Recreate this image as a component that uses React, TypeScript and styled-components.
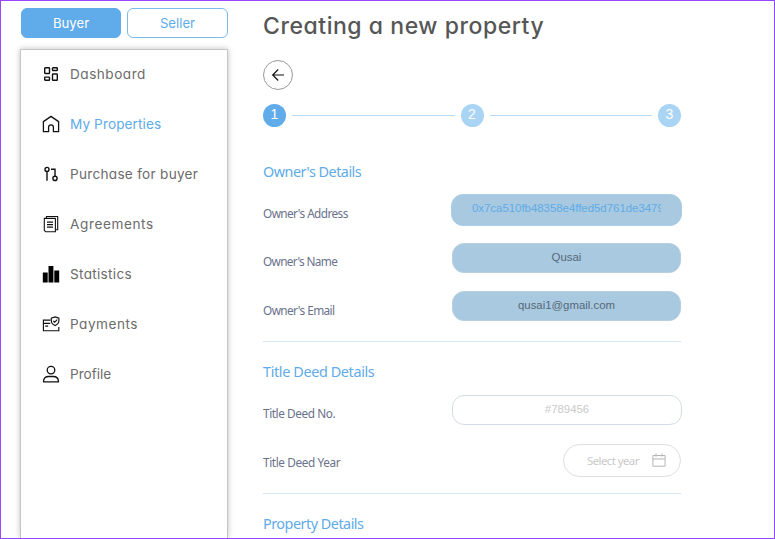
import React from "react";
import styled, { createGlobalStyle } from "styled-components";

const GlobalStyle = createGlobalStyle`
  * { box-sizing: border-box; }
  body { margin: 0; background: #fff; }
`;

const geometric = `font-family: Inter, sans-serif; font-feature-settings: "cv11";`;
const humanist = `font-family: "Noto Sans", "DejaVu Sans Condensed", sans-serif;`;

const Page = styled.div`
  display: flex;
  width: 775px;
  height: 539px;
  overflow: hidden;
  border: 1px solid #9747ff;
  background: #fff;
`;

const Sidebar = styled.aside`
  display: flex;
  flex-direction: column;
  width: 208px;
  margin-left: 19px;
  padding-top: 7px;
  flex: none;
`;

const RoleTabs = styled.div`
  display: flex;
  gap: 6px;
  padding-left: 1px;
`;

const RoleButton = styled.button<{ $active?: boolean }>`
  ${geometric}
  width: ${(p) => (p.$active ? 100 : 101)}px;
  height: 30px;
  padding: 0;
  border: 1px solid ${(p) => (p.$active ? "#60abe9" : "#7dbbed")};
  border-radius: 6px;
  background: ${(p) => (p.$active ? "#60abe9" : "#fff")};
  color: ${(p) => (p.$active ? "#fff" : "#60abe9")};
  font-size: 13.2px;
  font-weight: 400;
  line-height: 28px;
`;

const Nav = styled.nav`
  flex: 1;
  margin-top: 11px;
  padding-left: 21px;
  border: 1px solid #c5c5c5;
  border-bottom: 0;
  background: #fff;
  box-shadow: 0 0 6px rgba(0, 0, 0, 0.25);
`;

const NavItem = styled.a<{ $active?: boolean; $tracking: number }>`
  ${geometric}
  display: flex;
  align-items: center;
  gap: 10px;
  height: 49.9px;
  padding-bottom: 1.5px;
  color: ${(p) => (p.$active ? "#60abe9" : "#6b6b6b")};
  font-size: 13.6px;
  font-weight: 400;
  letter-spacing: ${(p) => p.$tracking}px;
  white-space: nowrap;

  svg { flex: none; width: 18px; height: 18px; color: #111; }
`;

const Main = styled.main`
  width: 418px;
  margin-left: 35px;
  flex: none;
`;

const Title = styled.h1`
  ${geometric}
  margin: 0;
  height: 58.5px;
  line-height: 50px;
  color: #565656;
  font-size: 23px;
  font-weight: 500;
  letter-spacing: 0.55px;
  white-space: nowrap;
`;

const BackButton = styled.button`
  display: flex;
  align-items: center;
  justify-content: center;
  width: 30px;
  height: 30px;
  padding: 0;
  border: 1px solid #999;
  border-radius: 50%;
  background: #fff;
`;

const Stepper = styled.div`
  display: flex;
  align-items: center;
  gap: 6px;
  height: 23px;
  margin-top: 14.5px;
`;

const Step = styled.span<{ $active?: boolean }>`
  width: 23px;
  height: 23px;
  flex: none;
  border-radius: 50%;
  background: ${(p) => (p.$active ? "#60abe9" : "#a9d4f4")};
  color: #fff;
  font: 14px/21px "Liberation Sans", sans-serif;
  text-align: center;
`;

const StepLine = styled.span`
  flex: 1;
  height: 1px;
  background: #b8dbf5;
`;

const Section = styled.section`
  margin-top: 31px;
`;

const NextSection = styled(Section)`
  margin-top: 0;
  padding-top: 16px;
  border-top: 1px solid #d3e8f6;
`;

const SectionTitle = styled.h2<{ $tracking: number }>`
  ${humanist}
  margin: 0;
  height: 27px;
  line-height: 27px;
  color: #60abe9;
  font-size: 14.4px;
  font-weight: 400;
  letter-spacing: ${(p) => p.$tracking}px;
`;

const Field = styled.div<{ $last?: boolean }>`
  display: flex;
  align-items: center;
  justify-content: space-between;
  height: 48.6px;
  margin-bottom: ${(p) => (p.$last ? "10.5px" : "0")};
`;

const Label = styled.label<{ $tracking: number }>`
  ${humanist}
  padding-top: 7px;
  color: #69718b;
  font-size: 11.8px;
  letter-spacing: ${(p) => p.$tracking}px;
  white-space: nowrap;
`;

const Pill = styled.div<{ $tone: "address" | "filled" | "empty" }>`
  width: ${(p) => ({ address: 231, filled: 229, empty: 230 })[p.$tone]}px;
  height: ${(p) => (p.$tone === "address" ? 32 : 30)}px;
  padding: 0 20px;
  margin-top: ${(p) => (p.$tone === "address" ? 1 : 0)}px;
  margin-right: ${(p) => (p.$tone === "filled" ? 0 : -1)}px;
  border: 1px solid ${(p) => ({ address: "#a8cee9", filled: "#b9cfe0", empty: "#d5dbe8" })[p.$tone]};
  border-radius: 12px;
  background: ${(p) => (p.$tone === "empty" ? "#fff" : "#a8c9df")};
  color: ${(p) => ({ address: "#60abe9", filled: "#566879", empty: "#c9c9c9" })[p.$tone]};
  font: 11.4px/26px "Liberation Sans", sans-serif;
  text-align: center;
`;

const PillText = styled.span`
  display: block;
  overflow: hidden;
  white-space: nowrap;
`;

const YearPicker = styled.div`
  ${humanist}
  display: flex;
  align-items: center;
  justify-content: space-between;
  width: 118px;
  height: 33px;
  margin-top: 4px;
  padding: 0 14px 0 23px;
  border: 1px solid #dedede;
  border-radius: 17px;
  color: #c9c9c9;
  font-size: 11.4px;
  letter-spacing: -0.55px;
`;

const DashboardIcon = () => (
  <svg viewBox="0 0 18 18" fill="none" stroke="currentColor" strokeWidth="1.4">
    <rect x="2.7" y="2.7" width="4.8" height="5.8" rx=".6" />
    <rect x="10.5" y="2.7" width="4.8" height="2.8" rx=".6" />
    <rect x="10.5" y="9" width="4.8" height="6.3" rx=".6" />
    <rect x="2.7" y="12.1" width="4.8" height="3.2" rx=".6" />
  </svg>
);
const HomeIcon = () => (
  <svg viewBox="0 0 18 18" fill="none" stroke="currentColor" strokeWidth="1.3" strokeLinejoin="round">
    <path d="M1.4 6.6 9 1.4l7.6 5.2v10.1h-5.2v-4.4a2.4 2.4 0 0 0-4.8 0v4.4H1.4Z" />
  </svg>
);
const TransferIcon = () => (
  <svg viewBox="0 0 18 18" fill="none" stroke="currentColor" strokeWidth="1.4">
    <circle cx="5" cy="4.4" r="2" />
    <path d="M5 6.4v9.4M9 4.2h4v6.8" />
    <circle cx="13" cy="13.4" r="2.1" />
  </svg>
);
const AgreementIcon = () => (
  <svg viewBox="0 0 18 18" fill="none" stroke="currentColor" strokeWidth="1.1" strokeLinejoin="round">
    <path d="M4.4 3.2V1.5h11.3v13.2h-2.2M2.3 3.4h11.1v13.4H3.8l-1.5-1.5Z" />
    <path d="M5 7.2h6M5 9.7h6M5 12.2h6" strokeWidth="1.2" />
  </svg>
);
const StatisticsIcon = () => (
  <svg viewBox="0 0 18 18" fill="#000">
    <path d="M.8 7.5h4.9v9.9H.8zM6.5 1h4.9v16.4H6.5zM12.3 5.5h4.9v11.9h-4.9z" />
  </svg>
);
const PaymentIcon = () => (
  <svg viewBox="0 0 18 18" fill="none" stroke="currentColor" strokeWidth="1.15">
    <path d="M8.5 5.1H1.4v10.6h15.4v-3.6M1.4 8.3h6.8M3.2 11.1h3" />
    <path d="m13.1 1.9 3.8 1.3v2.6c0 2.1-1.5 3.7-3.8 4.8-2.3-1.1-3.8-2.7-3.8-4.8V3.2ZM11.2 5.9l1.5 1.3 2.5-2.5" />
  </svg>
);
const ProfileIcon = () => (
  <svg viewBox="0 0 18 18" fill="none" stroke="currentColor" strokeWidth="1.3" strokeLinejoin="round">
    <circle cx="9" cy="5.1" r="3.8" />
    <path d="M1.5 16.8c0-3.6 1.9-5.3 5.3-5.3h4.4c3.4 0 5.3 1.7 5.3 5.3Z" />
  </svg>
);
const BackIcon = () => (
  <svg width="14" height="14" viewBox="0 0 14 14" fill="none" stroke="#111" strokeWidth="1.2">
    <path d="M13 7H1.7M7.2 1.5 1.7 7l5.5 5.5" />
  </svg>
);
const CalendarIcon = () => (
  <svg width="14" height="14" viewBox="0 0 14 14" fill="none" stroke="#b5b5b5" strokeWidth="1">
    <path d="M.9 2.5h12.2v10.7H.9zM.9 6h12.2M4 .5v3.2M10 .5v3.2" />
  </svg>
);

const navItems = [
  { label: "Dashboard", icon: DashboardIcon, tracking: 0.5 },
  { label: "My Properties", icon: HomeIcon, tracking: 0.1, active: true },
  { label: "Purchase for buyer", icon: TransferIcon, tracking: 0.28 },
  { label: "Agreements", icon: AgreementIcon, tracking: 0.6 },
  { label: "Statistics", icon: StatisticsIcon, tracking: 0.3 },
  { label: "Payments", icon: PaymentIcon, tracking: 0.5 },
  { label: "Profile", icon: ProfileIcon, tracking: 0 },
];

export default function App() {
  return (
    <>
      <GlobalStyle />
      <Page>
        <Sidebar>
          <RoleTabs>
            <RoleButton $active>Buyer</RoleButton>
            <RoleButton>Seller</RoleButton>
          </RoleTabs>
          <Nav>
            {navItems.map(({ label, icon: Icon, tracking, active }) => (
              <NavItem key={label} $active={active} $tracking={tracking}>
                <Icon />
                {label}
              </NavItem>
            ))}
          </Nav>
        </Sidebar>
        <Main>
          <Title>Creating a new property</Title>
          <BackButton aria-label="Back"><BackIcon /></BackButton>
          <Stepper>
            <Step $active>1</Step>
            <StepLine />
            <Step>2</Step>
            <StepLine />
            <Step>3</Step>
          </Stepper>
          <Section>
            <SectionTitle $tracking={-0.5}>Owner's Details</SectionTitle>
            <Field>
              <Label $tracking={-0.58}>Owner's Address</Label>
              <Pill $tone="address"><PillText>0x7ca510fb48358e4ffed5d761de3479</PillText></Pill>
            </Field>
            <Field>
              <Label $tracking={-0.66}>Owner's Name</Label>
              <Pill $tone="filled"><PillText>Qusai</PillText></Pill>
            </Field>
            <Field $last>
              <Label $tracking={-0.58}>Owner's Email</Label>
              <Pill $tone="filled"><PillText>qusai1@gmail.com</PillText></Pill>
            </Field>
          </Section>
          <NextSection>
            <SectionTitle $tracking={-0.37}>Title Deed Details</SectionTitle>
            <Field>
              <Label $tracking={-0.42}>Title Deed No.</Label>
              <Pill $tone="empty"><PillText>#789456</PillText></Pill>
            </Field>
            <Field $last>
              <Label $tracking={-0.4}>Title Deed Year</Label>
              <YearPicker>Select year<CalendarIcon /></YearPicker>
            </Field>
          </NextSection>
          <NextSection>
            <SectionTitle $tracking={-0.5}>Property Details</SectionTitle>
          </NextSection>
        </Main>
      </Page>
    </>
  );
}
